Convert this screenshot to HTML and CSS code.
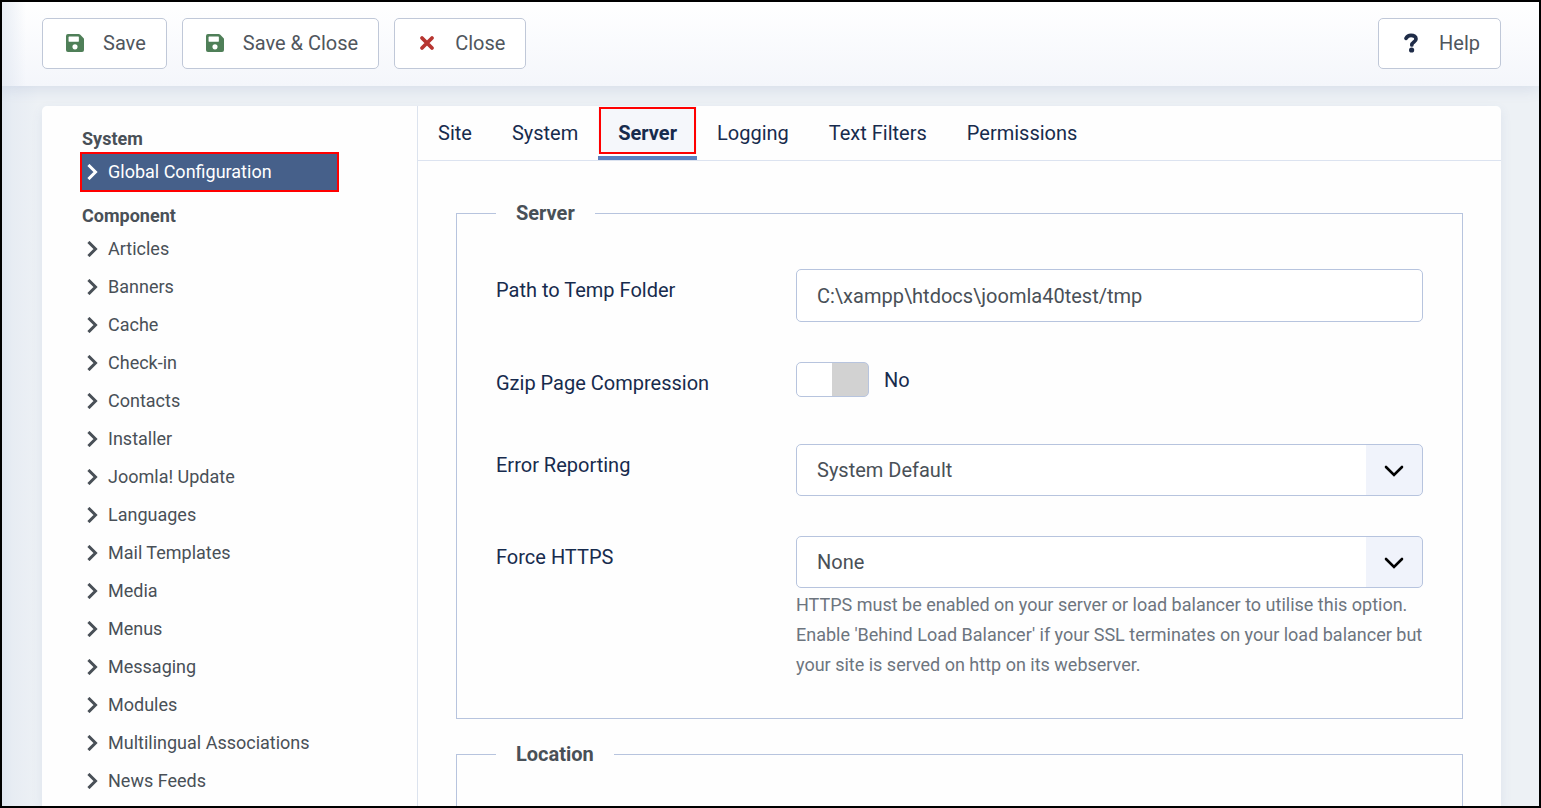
FILE: index.html
```html
<!DOCTYPE html>
<html lang="en">
<head>
<meta charset="utf-8">
<title>Global Configuration</title>
<link rel="stylesheet" href="styles.css">
</head>
<body>
<svg class="sprite" aria-hidden="true">
  <symbol id="chevron" viewBox="0 0 11 16"><path d="M2.500 2l6 6-6 6" fill="none" stroke="currentColor" stroke-width="3" stroke-linecap="square" stroke-linejoin="miter"/></symbol>
  <symbol id="save" viewBox="0 0 448 448"><path fill="currentColor" fill-rule="evenodd" d="M434 98L350 14A48 48 0 0 0 316 0H48A48 48 0 0 0 0 48v352a48 48 0 0 0 48 48h352a48 48 0 0 0 48-48V132a48 48 0 0 0-14-34zM224 384a64 64 0 1 1 0-128 64 64 0 0 1 0 128zm96-304v100a12 12 0 0 1-12 12H76a12 12 0 0 1-12-12V76a12 12 0 0 1 12-12h229l12 4z"/></symbol>
  <symbol id="caret" viewBox="0 0 20 12"><path d="M2 2l8 8 8-8" fill="none" stroke="currentColor" stroke-width="2.6" stroke-linecap="round" stroke-linejoin="miter"/></symbol>
</svg>
<div class="app">
  <header class="toolbar">
    <button class="btn" type="button"><svg class="icon green"><use href="#save"/></svg>Save</button>
    <button class="btn" type="button"><svg class="icon green"><use href="#save"/></svg>Save &amp; Close</button>
    <button class="btn" type="button"><svg class="icon red" viewBox="0 0 18 18"><path d="M4 4l10 10M14 4L4 14" fill="none" stroke="currentColor" stroke-width="3.8" stroke-linecap="round"/></svg>Close</button>
    <button class="btn help" type="button"><svg class="icon navy" viewBox="0 0 18 20"><path d="M4 5.400C5 3.400 6.700 2.300 9 2.300c3 0 5 1.500 5 3.700 0 3-4.200 3-4.200 6" fill="none" stroke="currentColor" stroke-width="3.700" stroke-linecap="round"/><circle cx="9.600" cy="17" r="2.600" fill="currentColor"/></svg>Help</button>
  </header>
  <main class="card">
    <nav class="sidebar" aria-label="Configuration">
      <h2>System</h2>
      <ul>
        <li><a class="active" href="#"><svg><use href="#chevron"/></svg>Global Configuration</a></li>
      </ul>
      <h2>Component</h2>
      <ul>
        <li><a href="#"><svg><use href="#chevron"/></svg>Articles</a></li>
        <li><a href="#"><svg><use href="#chevron"/></svg>Banners</a></li>
        <li><a href="#"><svg><use href="#chevron"/></svg>Cache</a></li>
        <li><a href="#"><svg><use href="#chevron"/></svg>Check-in</a></li>
        <li><a href="#"><svg><use href="#chevron"/></svg>Contacts</a></li>
        <li><a href="#"><svg><use href="#chevron"/></svg>Installer</a></li>
        <li><a href="#"><svg><use href="#chevron"/></svg>Joomla! Update</a></li>
        <li><a href="#"><svg><use href="#chevron"/></svg>Languages</a></li>
        <li><a href="#"><svg><use href="#chevron"/></svg>Mail Templates</a></li>
        <li><a href="#"><svg><use href="#chevron"/></svg>Media</a></li>
        <li><a href="#"><svg><use href="#chevron"/></svg>Menus</a></li>
        <li><a href="#"><svg><use href="#chevron"/></svg>Messaging</a></li>
        <li><a href="#"><svg><use href="#chevron"/></svg>Modules</a></li>
        <li><a href="#"><svg><use href="#chevron"/></svg>Multilingual Associations</a></li>
        <li><a href="#"><svg><use href="#chevron"/></svg>News Feeds</a></li>
      </ul>
    </nav>
    <div class="content">
      <div class="tabs" role="tablist">
        <button type="button" role="tab">Site</button>
        <button type="button" role="tab">System</button>
        <button type="button" role="tab" class="selected" aria-selected="true">Server</button>
        <button type="button" role="tab">Logging</button>
        <button type="button" role="tab">Text Filters</button>
        <button type="button" role="tab">Permissions</button>
      </div>
      <form class="panel">
        <fieldset>
          <legend>Server</legend>
          <div class="fields">
            <div class="row">
              <label for="tmp">Path to Temp Folder</label>
              <input class="control" id="tmp" type="text" value="C:\xampp\htdocs\joomla40test/tmp">
            </div>
            <div class="row">
              <label for="gzip">Gzip Page Compression</label>
              <div class="switch"><input id="gzip" type="checkbox" role="switch"><span>No</span></div>
            </div>
            <div class="row">
              <label for="errors">Error Reporting</label>
              <div class="select"><select class="control" id="errors"><option>System Default</option></select><svg><use href="#caret"/></svg></div>
            </div>
            <div class="row">
              <label for="https">Force HTTPS</label>
              <div>
                <div class="select"><select class="control" id="https" aria-describedby="https-help"><option>None</option></select><svg><use href="#caret"/></svg></div>
                <p id="https-help">HTTPS must be enabled on your server or load balancer to utilise this option. Enable 'Behind Load Balancer' if your SSL terminates on your load balancer but your site is served on http on its webserver.</p>
              </div>
            </div>
          </div>
        </fieldset>
        <fieldset>
          <legend>Location</legend>
          <div class="fields"></div>
        </fieldset>
      </form>
    </div>
  </main>
</div>
</body>
</html>
```
FILE: styles.css
```css
* { box-sizing: border-box; }
body {
  margin: 0;
  font: 20px/30px Roboto, "Liberation Sans", sans-serif;
  color: #172b4d;
}
button, input, select { font: inherit; color: inherit; }
.sprite { position: absolute; width: 0; height: 0; }
.app {
  display: flex;
  flex-direction: column;
  height: 100vh;
  overflow: hidden;
  border: 2px solid #000;
  background: linear-gradient(90deg, #dfe6f0, #e7ecf3 10px, #edf1f5 36px, #edf1f5);
}
.toolbar {
  display: flex;
  flex: none;
  gap: 15px;
  padding: 16px 38px 17px 40px;
  background:
    linear-gradient(90deg, rgba(223, 230, 240, .7), rgba(255, 255, 255, 0) 24px),
    linear-gradient(#fff, #f4f6fb);
  box-shadow: 0 3px 14px rgba(60, 90, 160, .13);
}
.btn {
  display: flex;
  align-items: center;
  height: 51px;
  padding: 0 20px 2px 23px;
  border: 1px solid #c0c8d8;
  border-radius: 5px;
  background: #fff;
  color: #50565d;
}
.help { margin-left: auto; }
.icon { width: 18px; height: 18px; margin-right: 19px; }
.green { color: #4f7f58; }
.red { color: #b73530; }
.navy { color: #1f2c48; height: 20px; }
.card {
  display: flex;
  flex: 1;
  min-height: 0;
  margin: 20px 38px 0 40px;
  border-radius: 5px 5px 0 0;
  background: #fefefe;
  box-shadow: 0 4px 12px rgba(60, 90, 160, .09);
}
.sidebar {
  flex: none;
  width: 376px;
  padding: 19px 80px 0 40px;
  border-right: 1px solid #dce3ee;
  font-size: 18px;
  color: #495057;
}
.sidebar h2 { margin: 0; font-size: 18px; line-height: 28px; font-weight: 700; }
.sidebar ul { margin: 0 0 11px; padding: 0; list-style: none; }
.sidebar a {
  display: flex;
  align-items: center;
  height: 36px;
  margin: 1px 0;
  padding-left: 5px;
  color: inherit;
  text-decoration: none;
}
.sidebar li { display: flow-root; }
.sidebar svg { width: 11px; height: 16px; margin-right: 10px; }
.sidebar .active {
  outline: 2px solid #f00;
  background: #46608a;
  color: #fff;
}
.content { flex: 1; min-width: 0; }
.tabs { display: flex; height: 55px; border-bottom: 1px solid #dce3f0; }
.tabs button { padding: 0 20px; border: 0; background: none; }
.tabs .selected {
  position: relative;
  background: linear-gradient(#f5f7fb 48px, #fff 48px, #fff 50px, #5b80c0 50px);
  font-weight: 700;
}
.tabs .selected::after {
  content: "";
  position: absolute;
  inset: 1px 1px 6px;
  border: 2px solid #f00;
}
.panel { display: grid; gap: 20px; padding: 37px 38px; }
fieldset { min-width: 0; margin: 0; padding: 0 39px; border: 1px solid #b7c4de; }
legend { padding: 0 20px; color: #495057; font-weight: 700; }
.fields { display: grid; gap: 40px; padding: 41px 0 38px; }
.row { display: grid; grid-template-columns: 300px 1fr; align-items: start; }
.row label { padding: 6px 0; }
.control {
  display: block;
  width: 100%;
  height: 53px;
  padding: 0 20px;
  border: 1px solid #b7c4de;
  border-radius: 5px;
  background: #fff;
  color: #495057;
}
.select { position: relative; }
.select select {
  appearance: none;
  height: 52px;
  background: linear-gradient(#f0f3fb, #f0f3fb) right / 56px 100% no-repeat #fff;
}
.select svg {
  position: absolute;
  top: 21px;
  right: 19px;
  width: 20px;
  height: 12px;
  color: #000;
  pointer-events: none;
}
.switch { display: flex; align-items: center; gap: 15px; }
.switch input {
  appearance: none;
  width: 73px;
  height: 35px;
  margin: 0;
  border: 1px solid #b7c4de;
  border-radius: 5px;
  background: linear-gradient(90deg, #fff 35px, #d2d2d2 35px);
}
.row p { margin: 2px 0 0; font-size: 18px; color: #6d757e; }
```
